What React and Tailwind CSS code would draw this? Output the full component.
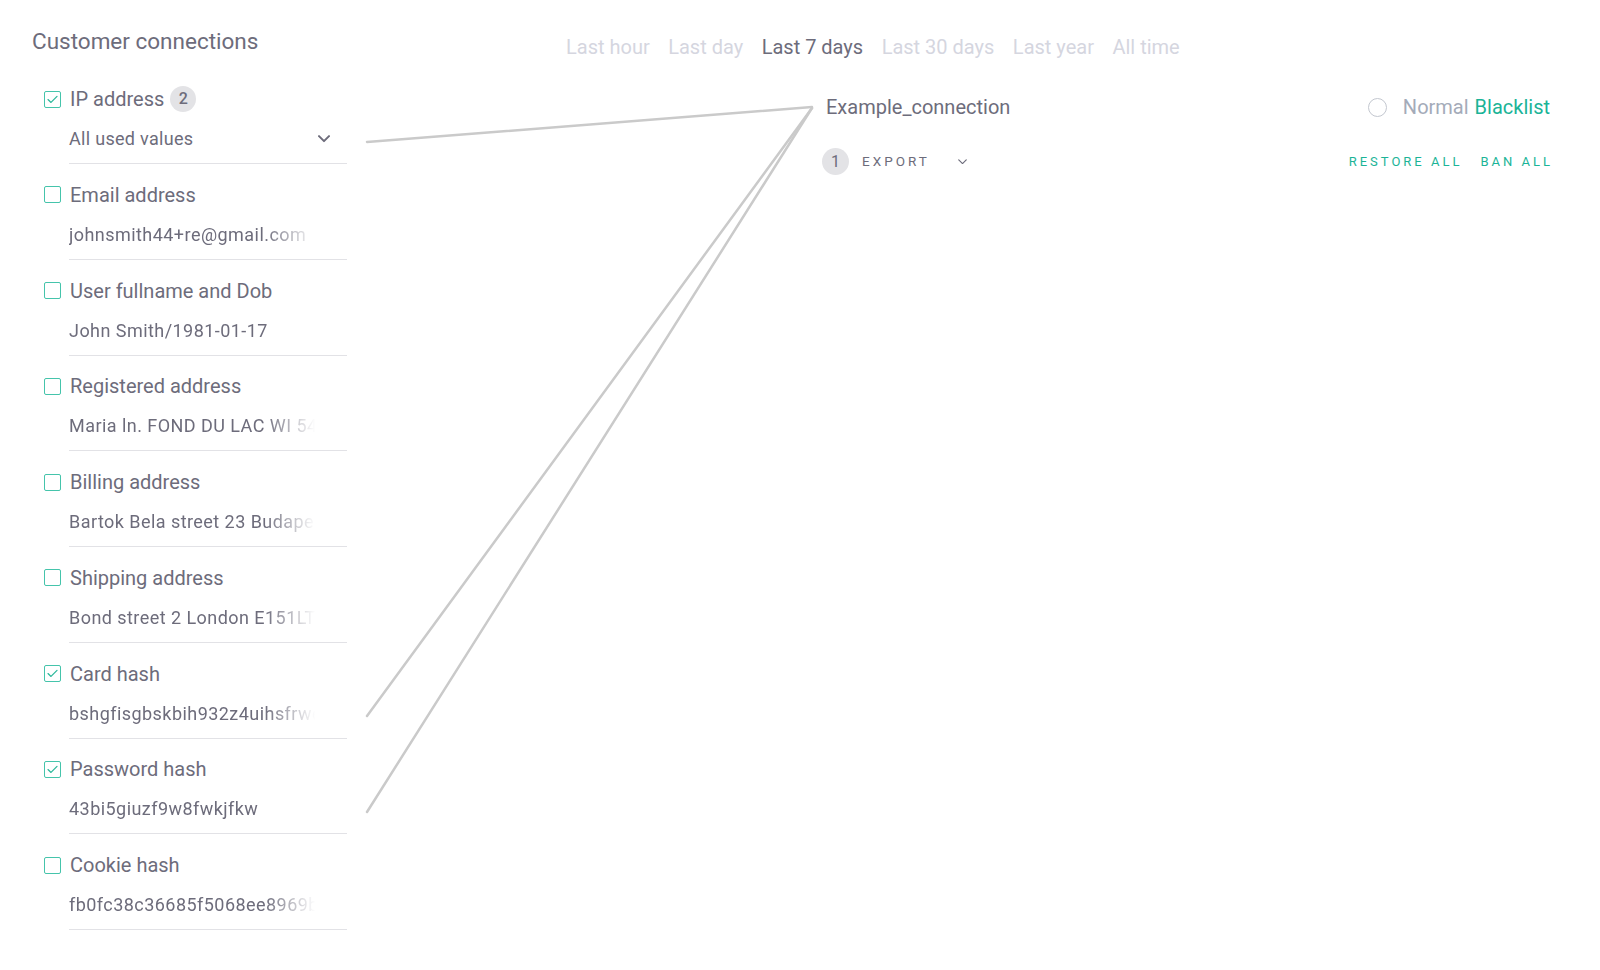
const rows = [
  { label: "IP address", checked: true, badge: "2", select: "All used values" },
  { label: "Email address", value: "johnsmith44+re@gmail.com" },
  { label: "User fullname and Dob", value: "John Smith/1981-01-17" },
  { label: "Registered address", value: "Maria ln. FOND DU LAC WI 54935" },
  { label: "Billing address", value: "Bartok Bela street 23 Budapest 1111" },
  { label: "Shipping address", value: "Bond street 2 London E151LT" },
  { label: "Card hash", checked: true, value: "bshgfisgbskbih932z4uihsfrwe8" },
  { label: "Password hash", checked: true, value: "43bi5giuzf9w8fwkjfkw" },
  { label: "Cookie hash", value: "fb0fc38c36685f5068ee8969b2c1" },
];

const ranges = ["Last hour", "Last day", "Last 7 days", "Last 30 days", "Last year", "All time"];

function Checkbox({ checked }) {
  return (
    <span className="w-[17px] h-[17px] shrink-0 rounded-[2px] border-[1.5px] border-[#45c4ab] flex items-center justify-center">
      {checked && (
        <svg width="11" height="9" viewBox="0 0 11 9" fill="none">
          <path d="M1 4.6 L4 7.4 L10 1.4" stroke="#2fb99c" strokeWidth="1.3" strokeLinecap="round" strokeLinejoin="round" />
        </svg>
      )}
    </span>
  );
}

function Chevron({ size = 12, stroke = 2 }) {
  return (
    <svg width={size} height={size * 0.6} viewBox="0 0 12 7" fill="none">
      <path d="M1 1 L6 6 L11 1" stroke="#6d6c7b" strokeWidth={stroke} strokeLinecap="round" strokeLinejoin="round" />
    </svg>
  );
}

function Row({ row }) {
  return (
    <div className="mb-[18.75px]">
      <div className="flex items-center gap-[9px] h-6">
        <Checkbox checked={row.checked} />
        <span className="text-[20px] leading-6">{row.label}</span>
        {row.badge && (
          <span className="ml-[-3px] w-[26px] h-[26px] rounded-full bg-[#e3e3e6] text-[16px] font-medium flex items-center justify-center">
            {row.badge}
          </span>
        )}
      </div>
      <div className="ml-[25px] mt-4 w-[278px] pb-3 border-b border-[#e2e2e6]">
        {row.select ? (
          <div className="flex items-center justify-between h-6 pr-[17px]">
            <span className="text-[18px] leading-6 tracking-[0.3px]">{row.select}</span>
            <Chevron />
          </div>
        ) : (
          <div className="w-[248px] h-6 text-[18px] leading-6 tracking-[0.45px] whitespace-nowrap overflow-hidden [mask-image:linear-gradient(to_right,#000_195px,transparent_246px)]">
            {row.value}
          </div>
        )}
      </div>
    </div>
  );
}

export default function App() {
  return (
    <div className="relative w-[1600px] h-[970px] bg-white text-[#6d6c7b] font-['Roboto',sans-serif] overflow-hidden flex">
      <aside className="w-[367px] shrink-0 pt-[27px]">
        <h1 className="pl-8 text-[22.5px] leading-7">Customer connections</h1>
        <div className="pl-11 mt-8">
          {rows.map((r) => (
            <Row key={r.label} row={r} />
          ))}
        </div>
      </aside>

      <main className="flex-1 pt-[33px]">
        <nav className="ml-[199px] flex gap-[18.5px] text-[20px] leading-7">
          {ranges.map((r) => (
            <span key={r} className={r === "Last 7 days" ? "text-[#6d6c7b]" : "text-[#d5d6df]"}>
              {r}
            </span>
          ))}
        </nav>

        <section className="ml-[445px] mr-[47px] mt-8 pl-[14px]">
          <div className="flex items-center justify-between h-7 text-[20px]">
            <span>Example_connection</span>
            <div className="flex items-center pr-[3px]">
              <span className="w-[19px] h-[19px] rounded-full border-[1.5px] border-[#c3c7cf] mr-4" />
              <span className="text-[#a4abb9]">Normal</span>
              <span className="ml-[6px] text-[#1bb497]">Blacklist</span>
            </div>
          </div>
          <div className="mt-[27px] flex items-center justify-between">
            <div className="flex items-center ml-[-4px]">
              <span className="w-[27px] h-[27px] rounded-full bg-[#e3e3e6] text-[16px] flex items-center justify-center">1</span>
              <span className="ml-[13px] text-[13.5px] tracking-[3px]">EXPORT</span>
              <span className="ml-[28px] flex items-center">
                <Chevron size={9} stroke={1.6} />
              </span>
            </div>
            <div className="flex items-center gap-[18px] text-[13px] tracking-[3px] text-[#1bb497]">
              <span>RESTORE ALL</span>
              <span>BAN ALL</span>
            </div>
          </div>
        </section>
      </main>

      <svg className="absolute inset-0 pointer-events-none" width="1600" height="970">
        <g stroke="#cacaca" strokeWidth="2.5" strokeLinecap="round" fill="none">
          <line x1="367" y1="142" x2="812" y2="107" />
          <line x1="367" y1="716" x2="812" y2="108" />
          <line x1="367" y1="812" x2="812" y2="108" />
        </g>
      </svg>
    </div>
  );
}
